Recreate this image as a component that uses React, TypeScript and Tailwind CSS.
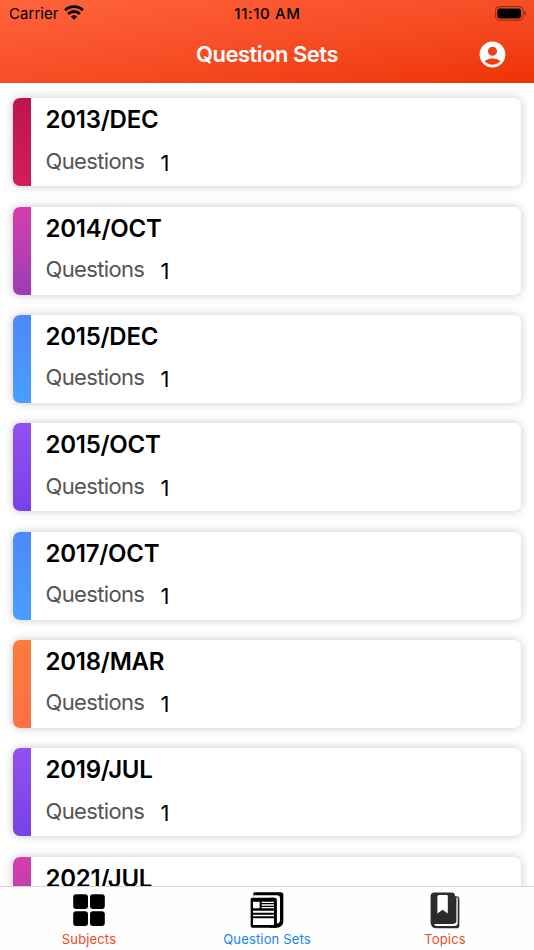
import React from 'react';
import { MdAccountCircle } from 'react-icons/md';

interface QuestionSet {
  title: string;
  count: number;
  stripe: string;
}

const crimson = 'from-[#c0134c] to-[#d21e5b]';
const pink = 'from-[#d83cac] to-[#9c3cb4]';
const blue = 'from-[#4d88fb] to-[#479fff]';
const purple = 'from-[#9250f0] to-[#7841e8]';
const orange = 'from-[#ff7a3d] to-[#ff7043]';

const questionSets: QuestionSet[] = [
  { title: '2013/DEC', count: 1, stripe: crimson },
  { title: '2014/OCT', count: 1, stripe: pink },
  { title: '2015/DEC', count: 1, stripe: blue },
  { title: '2015/OCT', count: 1, stripe: purple },
  { title: '2017/OCT', count: 1, stripe: blue },
  { title: '2018/MAR', count: 1, stripe: orange },
  { title: '2019/JUL', count: 1, stripe: purple },
  { title: '2021/JUL', count: 1, stripe: pink },
];

const WifiIcon = () => (
  <svg width="20" height="15" viewBox="0 0 20 15" fill="none" stroke="black" strokeWidth="2.8">
    <path d="M1.1 5.2a12.7 12.7 0 0 1 17.8 0" />
    <path d="M4.1 8.9a8.4 8.4 0 0 1 11.8 0" />
    <path d="M10 14.8 6.9 11.6a4.6 4.6 0 0 1 6.2 0z" fill="black" stroke="none" />
  </svg>
);

const BatteryIcon = () => (
  <svg width="32" height="15" viewBox="0 0 32 15">
    <rect x="0.6" y="0.6" width="27.4" height="13.6" rx="3.8" fill="none" stroke="black" strokeOpacity="0.4" strokeWidth="1.1" />
    <rect x="2.3" y="2.4" width="23.7" height="10" rx="2.3" />
    <path d="M29.4 5.1c2.2.8 2.2 3.8 0 4.6z" fillOpacity="0.45" />
  </svg>
);

const GridIcon = () => (
  <svg width="32" height="32" viewBox="0 0 32 32">
    <rect x="0.2" y="0.2" width="14.8" height="14.8" rx="3" />
    <rect x="17" y="0.2" width="14.8" height="14.8" rx="3" />
    <rect x="0.2" y="17.2" width="14.8" height="14.8" rx="3" />
    <rect x="17" y="17.2" width="14.8" height="14.8" rx="3" />
  </svg>
);

const NewspaperIcon = () => (
  <svg width="34" height="36" viewBox="0 0 102 108">
    {/* back page */}
    <path d="M14 1h78a8 8 0 0 1 8 8v78c0 12-8 20-20 20H60V14H10V5a4 4 0 0 1 4-4z" />
    <path d="M10 10h71a9 9 0 0 1 9 9v66c0 6-4 10-10 10V25a8 8 0 0 0-8-8H10z" fill="white" />
    {/* front page */}
    <path d="M7 17h65a8 8 0 0 1 8 8v82H7a5 5 0 0 1-5-5V22a5 5 0 0 1 5-5z" />
    <path
      fill="white"
      d="M9 29h20v20H9zM35 29h37v4H35zM35 37h37v4H35zM35 45h37v4H35zM9 56h63v6H9zM9 68h63v5H9zM9 79h63v20H9z"
    />
  </svg>
);

const BookmarkBookIcon = () => (
  <svg width="30" height="37" viewBox="0 0 30 37" fill="#2c2c2c">
    <path d="M24 4.2h2.2a3.2 3.2 0 0 1 3.2 3.2v26a2.8 2.8 0 0 1-2.8 2.8H6.2a5.5 5.5 0 0 1-5.4-5z" />
    <path d="M4.4 31.4h20.2a1.8 1.8 0 0 0 1.8-1.8V5.6h1.3v24.8a3.5 3.5 0 0 1-3.5 3.5H6.5c-1.8 0-2.5-1-2.1-2.5z" fill="white" />
    <path d="M4.4.5h17a3.7 3.7 0 0 1 3.7 3.7V29a3 3 0 0 1-3 3H5.2L.6 31.6V4.2A3.8 3.8 0 0 1 4.4.5z" />
    <path d="M9.2 3h7.6a1 1 0 0 1 1 1v17.6l-5.2-3.8-5.2 3.8V4.8A1.8 1.8 0 0 1 9.2 3z" fill="white" />
  </svg>
);

const Header = () => (
  <header className="h-[83px] shrink-0 bg-linear-to-br from-[#ff643b] to-[#ee3202]">
    <div className="flex h-7 items-center justify-between pl-[9px] pr-[7px]">
      <div className="flex w-40 items-center gap-[5px]">
        <span className="text-[15px] tracking-[0.05px]">Carrier</span>
        <span className="-mt-[3px]">
          <WifiIcon />
        </span>
      </div>
      <span className="pr-px text-[15px] font-medium tracking-[0.65px]">11:10 AM</span>
      <div className="-mt-[2px] flex w-40 justify-end">
        <BatteryIcon />
      </div>
    </div>
    <div className="flex h-[53px] items-center pr-[26px]">
      <div className="w-[42px] shrink-0" />
      <h1 className="flex-1 pl-[15px] text-center text-[22px] font-semibold tracking-[-0.5px] text-white">
        Question Sets
      </h1>
      <button aria-label="Account" className="-mt-px">
        <MdAccountCircle className="size-[31px] text-white" />
      </button>
    </div>
  </header>
);

const SetCard = ({ title, count, stripe }: QuestionSet) => (
  <li className="flex h-[88px] shrink-0 overflow-hidden rounded-[7px] bg-white shadow-[0_0_10px_rgba(0,0,0,0.22)]">
    <div className={`w-[18px] shrink-0 bg-linear-to-b ${stripe}`} />
    <div className="pl-[14.5px]">
      <h2 className="pt-[6px] text-[24px] leading-8 font-semibold tracking-[-0.25px]">{title}</h2>
      <div className="flex pt-[8.5px] text-[22px] leading-8">
        <span className="w-[115px] tracking-[-0.65px] text-[#555555]">Questions</span>
        <span className="pt-[2px]">{count}</span>
      </div>
    </div>
  </li>
);

interface TabProps {
  label: string;
  icon: React.ReactNode;
  active?: boolean;
}

const Tab = ({ label, icon, active }: TabProps) => (
  <button className="flex flex-1 flex-col items-center pt-[4px]">
    <span className="flex h-[38px] items-center">{icon}</span>
    <span className={`pt-[2px] text-[13px] leading-4 tracking-[0.15px] ${active ? 'text-[#1683f8]' : 'text-[#f2481f]'}`}>
      {label}
    </span>
  </button>
);

const App: React.FC = () => {
  return (
    <div className="flex h-[950px] w-[534px] flex-col overflow-hidden bg-white font-['Inter',sans-serif] text-black">
      <Header />
      <main className="min-h-0 flex-1 overflow-hidden">
        <ul className="flex flex-col gap-[20.35px] px-[13px] pt-[15.2px]">
          {questionSets.map((set) => (
            <SetCard key={set.title} {...set} />
          ))}
        </ul>
      </main>
      <nav className="flex h-16 shrink-0 border-t border-[#d5d5d5] bg-[#fefefe]">
        <Tab label="Subjects" icon={<GridIcon />} />
        <Tab label="Question Sets" icon={<NewspaperIcon />} active />
        <Tab label="Topics" icon={<BookmarkBookIcon />} />
      </nav>
    </div>
  );
};

export default App;
